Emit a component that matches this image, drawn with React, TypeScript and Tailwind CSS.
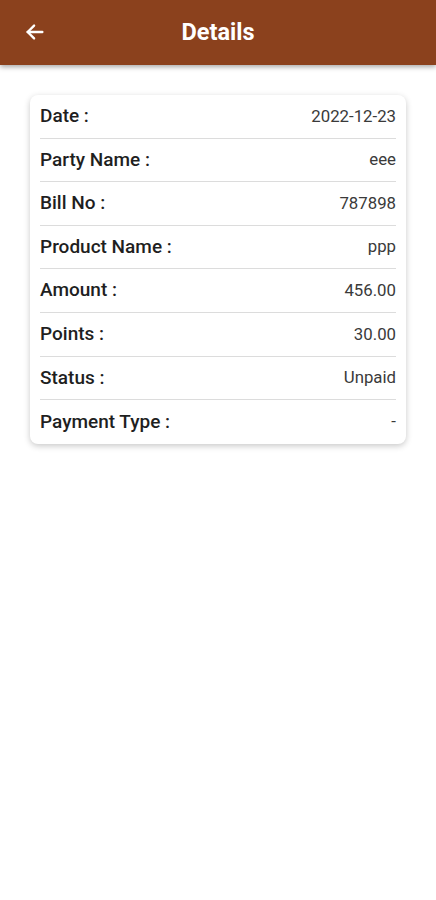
import React from "react";

const rows: [string, string][] = [
  ["Date :", "2022-12-23"],
  ["Party Name :", "eee"],
  ["Bill No :", "787898"],
  ["Product Name :", "ppp"],
  ["Amount :", "456.00"],
  ["Points :", "30.00"],
  ["Status :", "Unpaid"],
  ["Payment Type :", "-"],
];

export default function App() {
  return (
    <div className="min-h-[900px] w-[436px] bg-white" style={{ fontFamily: "Roboto, 'Noto Sans', sans-serif" }}>
      <div className="relative flex h-[65px] items-center justify-center bg-[#8b411d] shadow-[0_2px_5px_rgba(0,0,0,0.35)]">
        <button className="absolute left-[24px] top-[21px] text-white">
          <svg width="22" height="22" viewBox="0 0 24 24" fill="none" stroke="white" strokeWidth="2.6" strokeLinecap="round" strokeLinejoin="round">
            <path d="M20 12H4" />
            <path d="M11 5l-7 7 7 7" />
          </svg>
        </button>
        <h1 className="text-[23.5px] font-bold text-white">Details</h1>
      </div>
      <div className="px-[30px] pt-[30px]">
        <div className="rounded-[8px] bg-white px-[10px] shadow-[0_2px_6px_rgba(0,0,0,0.22)]">
          {rows.map(([k, v], i) => (
            <div
              key={k}
              className={`flex h-[43.6px] items-center justify-between ${i < rows.length - 1 ? "border-b border-[#dcdcdc]" : ""}`}
            >
              <span className="text-[19px] font-medium text-[#1f1f1f]">{k}</span>
              <span className="text-[16.8px] text-[#3a3a3a]">{v}</span>
            </div>
          ))}
        </div>
      </div>
    </div>
  );
}
